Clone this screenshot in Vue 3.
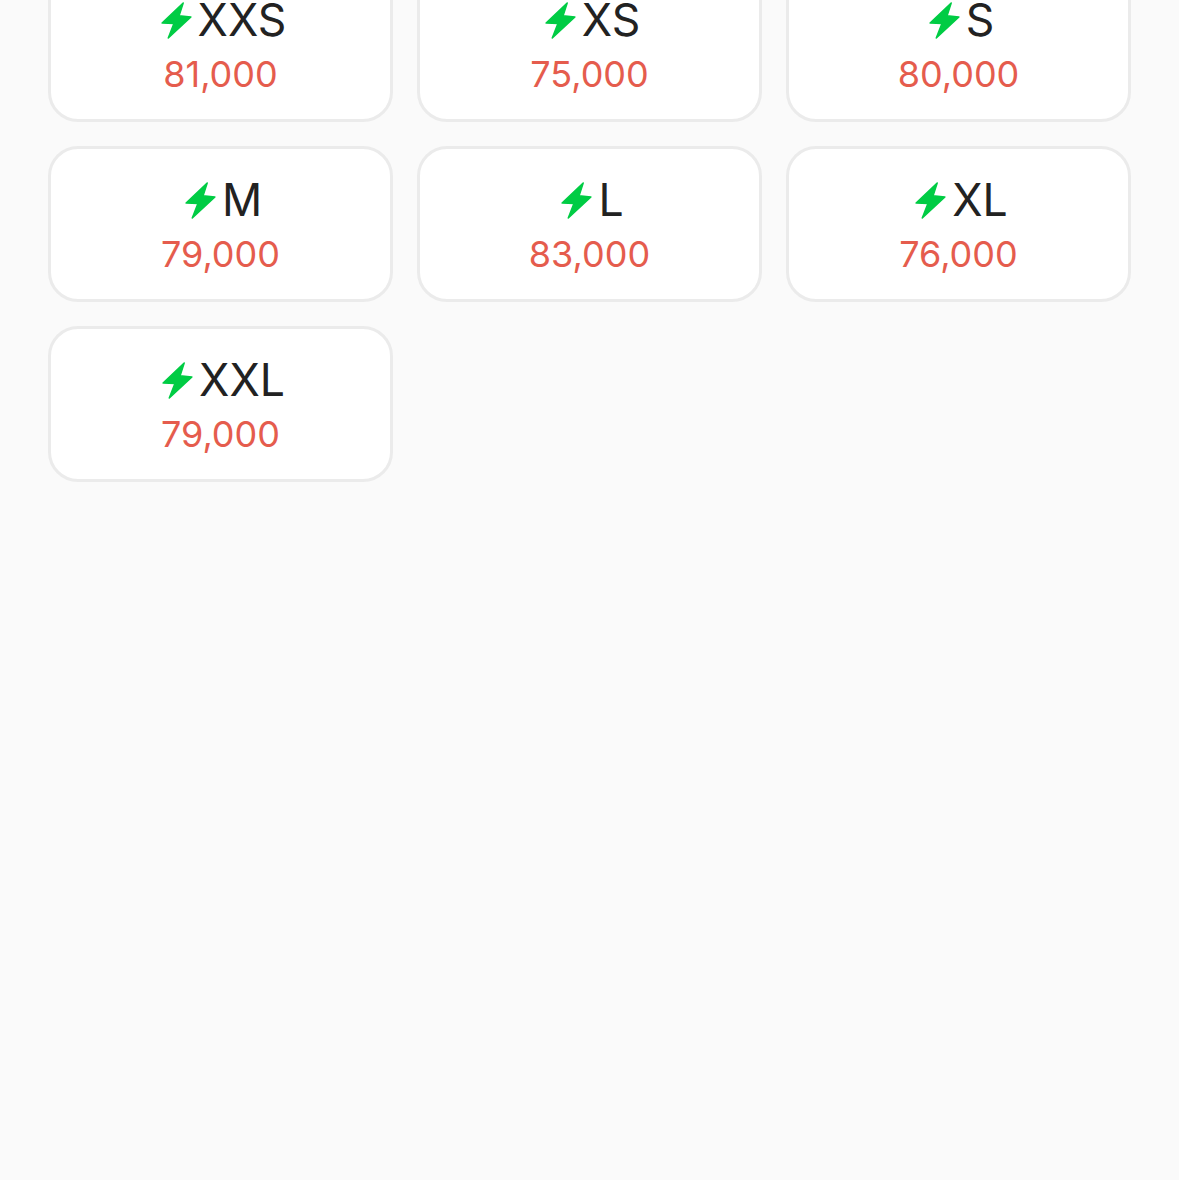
<script setup>
const sizes = [
  { name: 'XXS', price: '81,000' },
  { name: 'XS', price: '75,000' },
  { name: 'S', price: '80,000' },
  { name: 'M', price: '79,000' },
  { name: 'L', price: '83,000' },
  { name: 'XL', price: '76,000' },
  { name: 'XXL', price: '79,000' }
]
</script>

<template>
  <div class="page">
    <div class="grid">
      <div
        v-for="size in sizes"
        :key="size.name"
        class="card"
      >
        <div class="title">
          <svg
            class="bolt"
            viewBox="0 0 30 36"
          >
            <path d="M21.5 1 L1 20.5 L12.5 21 L7 35 L29 14.5 L17.5 13.5 Z" />
          </svg>
          <span>{{ size.name }}</span>
        </div>
        <div class="price">
          {{ size.price }}
        </div>
      </div>
    </div>
  </div>
</template>

<style>
html, body {
  margin: 0;
  background: #fafafa;
}
</style>

<style scoped>
.page {
  height: 1180px;
  overflow: hidden;
  background: #fafafa;
  font-family: Inter, 'Liberation Sans', sans-serif;
}
.grid {
  display: grid;
  grid-template-columns: repeat(3, 1fr);
  gap: 24px;
  margin-top: -34px;
  padding: 0 48px;
}
.card {
  box-sizing: border-box;
  height: 156px;
  padding-top: 26px;
  background: #fff;
  border: 3px solid #ebebeb;
  border-radius: 30px;
  text-align: center;
}
.title {
  display: flex;
  justify-content: center;
  align-items: center;
  gap: 6px;
  height: 50px;
  font-size: 44.5px;
  font-weight: 380;
  line-height: 50px;
  color: #222;
}
.bolt {
  width: 31px;
  height: 37px;
  margin-left: 6px;
  fill: #00cc44;
  stroke: #00cc44;
  stroke-width: 1.5;
  stroke-linejoin: round;
}
.price {
  margin-top: 7px;
  font-size: 36px;
  font-weight: 380;
  line-height: 44px;
  color: #e55c4d;
}
</style>
